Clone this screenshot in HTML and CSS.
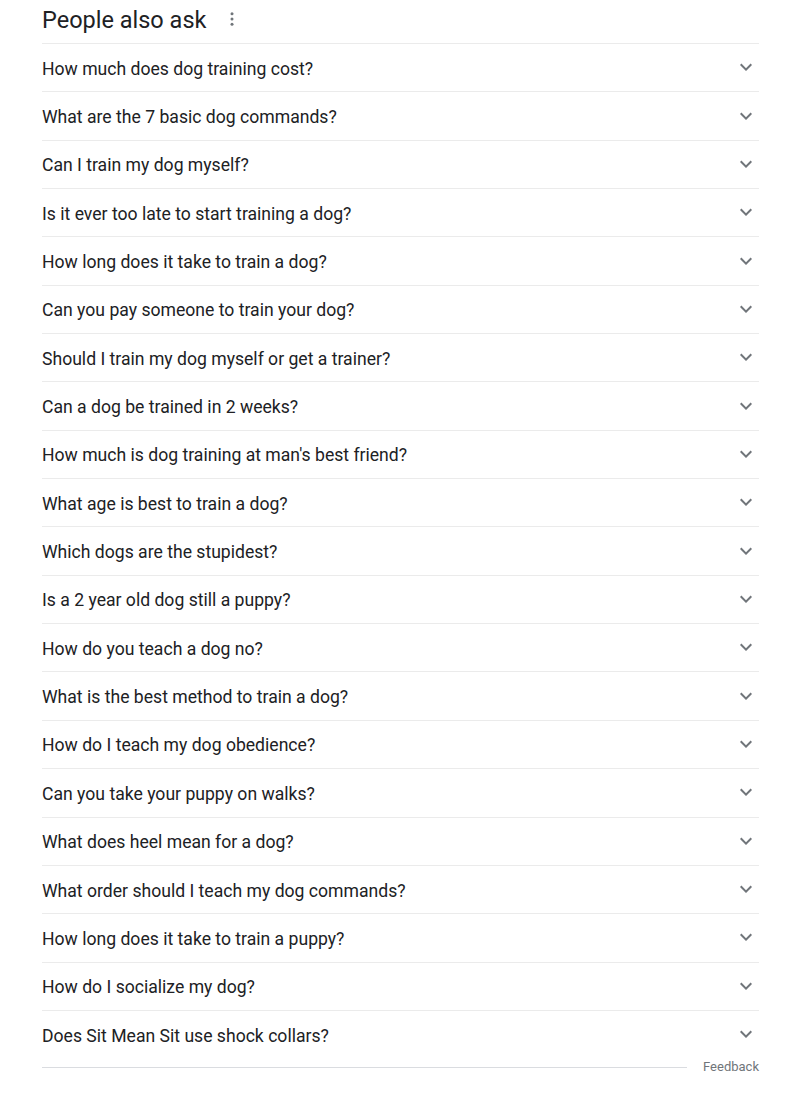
FILE: index.html
```html
<!DOCTYPE html>
<html>
<head>
<meta charset="utf-8">
<link rel="stylesheet" href="styles.css">
</head>
<body>
<div class="paa">
  <div class="paa-head">
    <h2 class="paa-title">People also ask</h2>
    <span class="paa-more">
      <svg viewBox="0 0 24 24" width="18" height="18"><circle cx="12" cy="5" r="2"/><circle cx="12" cy="12" r="2"/><circle cx="12" cy="19" r="2"/></svg>
    </span>
  </div>
  <div class="paa-list">
    <div class="q"><span class="q-text">How much does dog training cost?</span><svg class="chev" viewBox="0 0 24 24"><path d="M16.59 8.59L12 13.17 7.41 8.59 6 10l6 6 6-6z"/></svg></div>
    <div class="q"><span class="q-text">What are the 7 basic dog commands?</span><svg class="chev" viewBox="0 0 24 24"><path d="M16.59 8.59L12 13.17 7.41 8.59 6 10l6 6 6-6z"/></svg></div>
    <div class="q"><span class="q-text">Can I train my dog myself?</span><svg class="chev" viewBox="0 0 24 24"><path d="M16.59 8.59L12 13.17 7.41 8.59 6 10l6 6 6-6z"/></svg></div>
    <div class="q"><span class="q-text">Is it ever too late to start training a dog?</span><svg class="chev" viewBox="0 0 24 24"><path d="M16.59 8.59L12 13.17 7.41 8.59 6 10l6 6 6-6z"/></svg></div>
    <div class="q"><span class="q-text">How long does it take to train a dog?</span><svg class="chev" viewBox="0 0 24 24"><path d="M16.59 8.59L12 13.17 7.41 8.59 6 10l6 6 6-6z"/></svg></div>
    <div class="q"><span class="q-text">Can you pay someone to train your dog?</span><svg class="chev" viewBox="0 0 24 24"><path d="M16.59 8.59L12 13.17 7.41 8.59 6 10l6 6 6-6z"/></svg></div>
    <div class="q"><span class="q-text">Should I train my dog myself or get a trainer?</span><svg class="chev" viewBox="0 0 24 24"><path d="M16.59 8.59L12 13.17 7.41 8.59 6 10l6 6 6-6z"/></svg></div>
    <div class="q"><span class="q-text">Can a dog be trained in 2 weeks?</span><svg class="chev" viewBox="0 0 24 24"><path d="M16.59 8.59L12 13.17 7.41 8.59 6 10l6 6 6-6z"/></svg></div>
    <div class="q"><span class="q-text">How much is dog training at man's best friend?</span><svg class="chev" viewBox="0 0 24 24"><path d="M16.59 8.59L12 13.17 7.41 8.59 6 10l6 6 6-6z"/></svg></div>
    <div class="q"><span class="q-text">What age is best to train a dog?</span><svg class="chev" viewBox="0 0 24 24"><path d="M16.59 8.59L12 13.17 7.41 8.59 6 10l6 6 6-6z"/></svg></div>
    <div class="q"><span class="q-text">Which dogs are the stupidest?</span><svg class="chev" viewBox="0 0 24 24"><path d="M16.59 8.59L12 13.17 7.41 8.59 6 10l6 6 6-6z"/></svg></div>
    <div class="q"><span class="q-text">Is a 2 year old dog still a puppy?</span><svg class="chev" viewBox="0 0 24 24"><path d="M16.59 8.59L12 13.17 7.41 8.59 6 10l6 6 6-6z"/></svg></div>
    <div class="q"><span class="q-text">How do you teach a dog no?</span><svg class="chev" viewBox="0 0 24 24"><path d="M16.59 8.59L12 13.17 7.41 8.59 6 10l6 6 6-6z"/></svg></div>
    <div class="q"><span class="q-text">What is the best method to train a dog?</span><svg class="chev" viewBox="0 0 24 24"><path d="M16.59 8.59L12 13.17 7.41 8.59 6 10l6 6 6-6z"/></svg></div>
    <div class="q"><span class="q-text">How do I teach my dog obedience?</span><svg class="chev" viewBox="0 0 24 24"><path d="M16.59 8.59L12 13.17 7.41 8.59 6 10l6 6 6-6z"/></svg></div>
    <div class="q"><span class="q-text">Can you take your puppy on walks?</span><svg class="chev" viewBox="0 0 24 24"><path d="M16.59 8.59L12 13.17 7.41 8.59 6 10l6 6 6-6z"/></svg></div>
    <div class="q"><span class="q-text">What does heel mean for a dog?</span><svg class="chev" viewBox="0 0 24 24"><path d="M16.59 8.59L12 13.17 7.41 8.59 6 10l6 6 6-6z"/></svg></div>
    <div class="q"><span class="q-text">What order should I teach my dog commands?</span><svg class="chev" viewBox="0 0 24 24"><path d="M16.59 8.59L12 13.17 7.41 8.59 6 10l6 6 6-6z"/></svg></div>
    <div class="q"><span class="q-text">How long does it take to train a puppy?</span><svg class="chev" viewBox="0 0 24 24"><path d="M16.59 8.59L12 13.17 7.41 8.59 6 10l6 6 6-6z"/></svg></div>
    <div class="q"><span class="q-text">How do I socialize my dog?</span><svg class="chev" viewBox="0 0 24 24"><path d="M16.59 8.59L12 13.17 7.41 8.59 6 10l6 6 6-6z"/></svg></div>
    <div class="q"><span class="q-text">Does Sit Mean Sit use shock collars?</span><svg class="chev" viewBox="0 0 24 24"><path d="M16.59 8.59L12 13.17 7.41 8.59 6 10l6 6 6-6z"/></svg></div>
  </div>
  <div class="paa-foot">
    <div class="foot-line"></div>
    <span class="feedback">Feedback</span>
  </div>
</div>
</body>
</html>
```

FILE: styles.css
```css
html, body {
  margin: 0;
  padding: 0;
  background: #fff;
}
body {
  font-family: Roboto, "Liberation Sans", Arial, sans-serif;
  color: #202124;
}
.paa {
  width: 717px;
  margin-left: 42px;
}
.paa-head {
  height: 43px;
  display: flex;
  align-items: center;
}
.paa-title {
  margin: 0;
  font-weight: 400;
  font-size: 23.5px;
  line-height: 28px;
  color: #202124;
  padding-bottom: 3px;
}
.paa-more {
  display: flex;
  margin-left: 17px;
  margin-bottom: 6px;
  fill: #70757a;
}
.q {
  box-sizing: border-box;
  height: 48.35px;
  border-top: 1px solid #ebebeb;
  display: flex;
  align-items: center;
  justify-content: space-between;
}
.q-text {
  font-size: 17.6px;
  line-height: 24px;
  color: #202124;
  padding-top: 2px;
}
.chev {
  width: 24px;
  height: 24px;
  fill: #70757a;
  margin-right: 1px;
  margin-top: -1px;
}
.paa-foot {
  display: flex;
  align-items: center;
  height: 18px;
}
.foot-line {
  flex: 1;
  height: 1px;
  background: #dadce0;
  margin-right: 16px;
}
.feedback {
  font-size: 13px;
  color: #70757a;
  line-height: 18px;
}
```
